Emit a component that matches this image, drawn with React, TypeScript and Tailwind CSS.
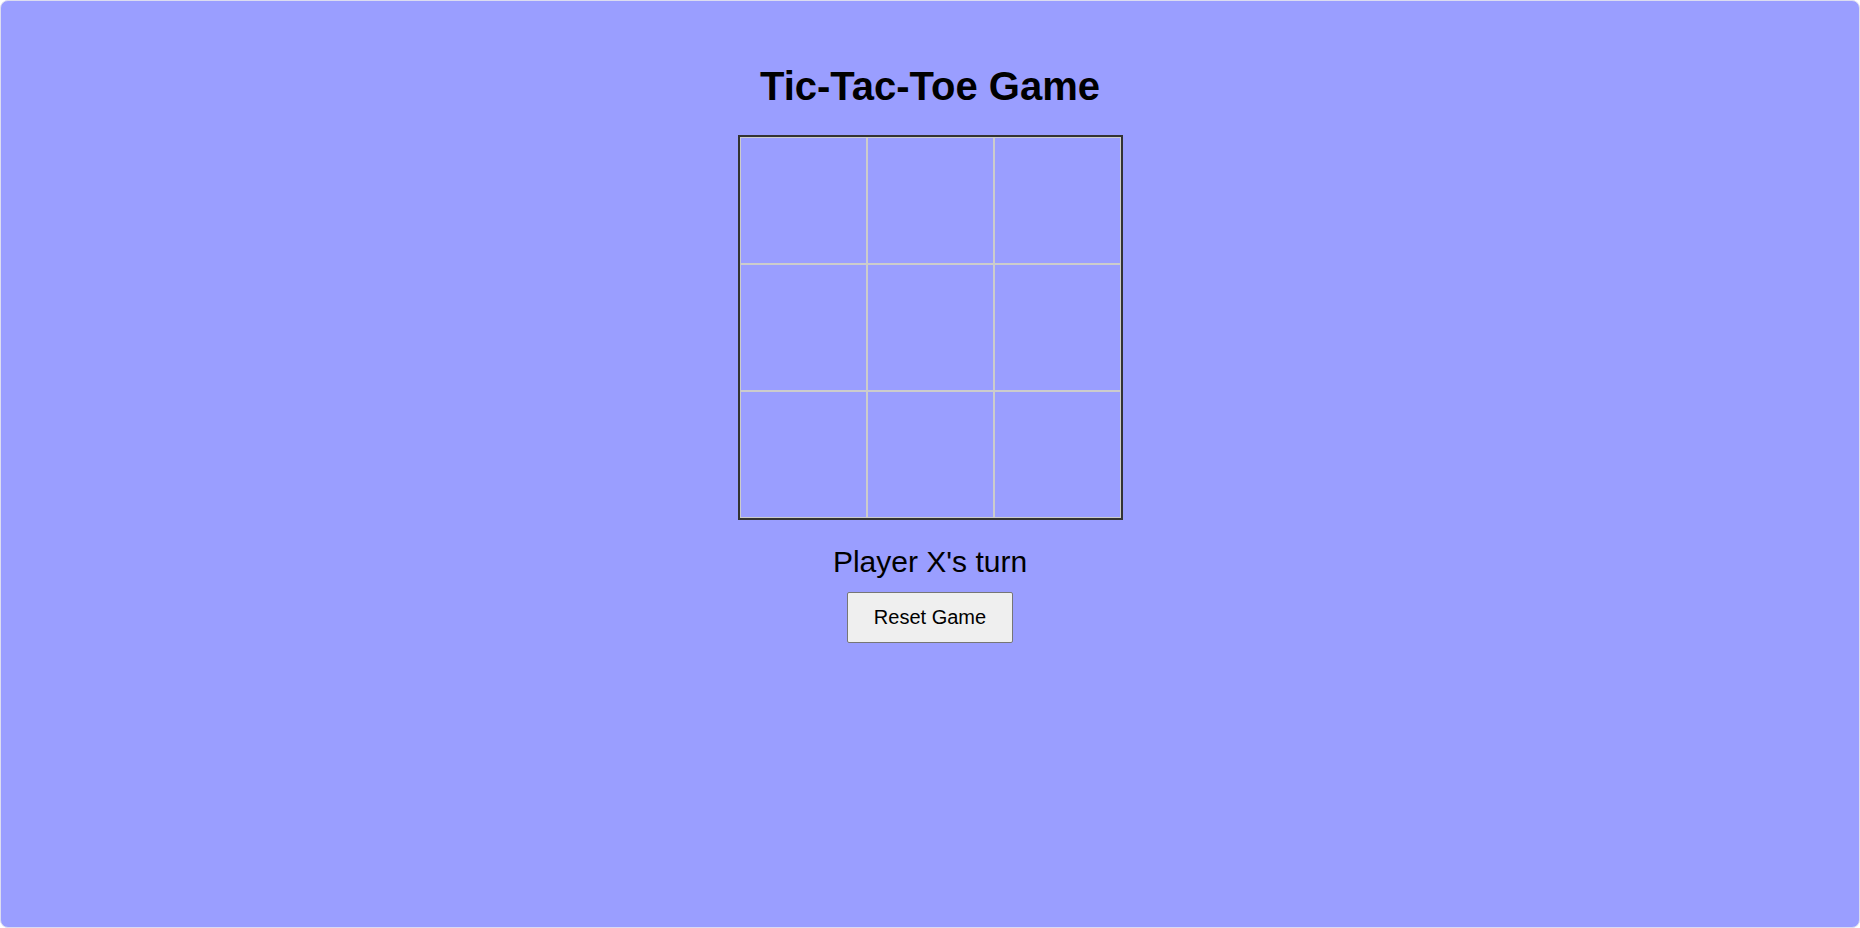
import React, { useState } from "react";

export default function App() {
  const [board, setBoard] = useState<(string | null)[]>(Array(9).fill(null));
  const [xNext, setXNext] = useState(true);

  const click = (i: number) => {
    if (board[i]) return;
    const b = board.slice();
    b[i] = xNext ? "X" : "O";
    setBoard(b);
    setXNext(!xNext);
  };

  return (
    <div className="w-full h-screen bg-white" style={{ fontFamily: '"Liberation Sans", Arial, sans-serif' }}>
      <div className="w-full h-full rounded-lg border border-[#dcdcf0] bg-[#9a9eff] flex flex-col items-center pt-[62px]">
        <h1 className="text-[40px] leading-[46px] font-bold text-black">Tic-Tac-Toe Game</h1>
        <div className="mt-[26px] border-2 border-[#333333] grid grid-cols-3 w-[385px] h-[385px]">
          {board.map((v, i) => (
            <button
              key={i}
              onClick={() => click(i)}
              className="w-[127px] h-[127px] border border-[#cccccc] flex items-center justify-center text-[60px] font-bold text-black"
            >
              {v}
            </button>
          ))}
        </div>
        <div className="mt-[25px] text-[30px] leading-[34px] text-black">Player {xNext ? "X" : "O"}'s turn</div>
        <button
          onClick={() => {
            setBoard(Array(9).fill(null));
            setXNext(true);
          }}
          className="mt-[13px] w-[166px] h-[51px] pb-[2px] bg-[#efefef] border border-[#767676] rounded-[2px] text-[20px] text-black"
        >
          Reset Game
        </button>
      </div>
    </div>
  );
}
